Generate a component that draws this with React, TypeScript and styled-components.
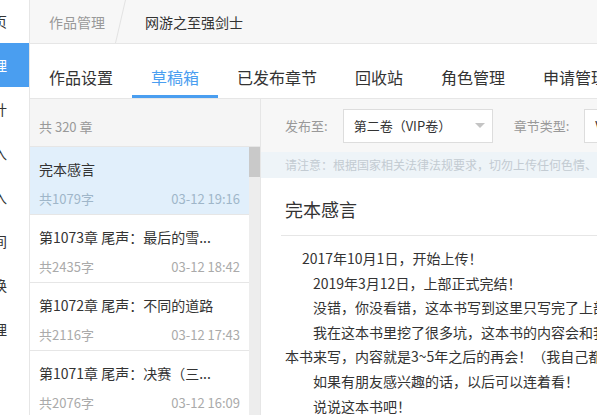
import styled, { createGlobalStyle } from "styled-components";

const blue = "#4a9ef0";
const line = "#e6e6e6";
const textMain = "#333";
const textGray = "#999";

const GlobalStyle = createGlobalStyle`
  html, body {
    margin: 0;
    padding: 0;
    background: #fff;
    overflow: hidden;
  }
  body {
    font-family: "Microsoft YaHei", "Noto Sans CJK SC", "Noto Sans", sans-serif;
    color: ${textMain};
  }
  * {
    box-sizing: border-box;
  }
`;

const Page = styled.div`
  display: flex;
  width: 597px;
  height: 415px;
  overflow: hidden;
`;

const SideNav = styled.nav`
  flex: none;
  width: 30px;
  border-right: 1px solid ${line};
  overflow: hidden;
  background: #fff;
`;

const SideInner = styled.div`
  width: 130px;
  margin-left: -101px;
`;

const SideItem = styled.div<{ $active?: boolean }>`
  height: 44px;
  line-height: 44px;
  padding-right: 22px;
  text-align: right;
  font-size: 14px;
  white-space: nowrap;
  overflow: hidden;
  color: ${(p) => (p.$active ? "#fff" : textMain)};
  background: ${(p) => (p.$active ? blue : "transparent")};
  &:first-child {
    height: 43px;
    line-height: 43px;
  }
`;

const Main = styled.div`
  flex: 1;
  min-width: 0;
  display: flex;
  flex-direction: column;
`;

const Crumbs = styled.div`
  flex: none;
  height: 44px;
  display: flex;
  align-items: center;
  padding-left: 19px;
  background: #f7f7f7;
  border-bottom: 1px solid ${line};
  font-size: 14px;
  white-space: nowrap;
`;

const Crumb = styled.span<{ $muted?: boolean }>`
  color: ${(p) => (p.$muted ? textGray : textMain)};
`;

const Slash = styled.span`
  width: 1px;
  height: 43px;
  margin: 0 24px 0 15px;
  background: #e2e2e2;
  transform: skewX(-13deg);
`;

const Tabs = styled.div`
  flex: none;
  height: 55px;
  display: flex;
  border-bottom: 1px solid ${line};
  white-space: nowrap;
`;

const Tab = styled.div<{ $active?: boolean }>`
  padding: 21px 19px 5px;
  line-height: 25px;
  font-size: 16px;
  color: ${(p) => (p.$active ? blue : textMain)};
  border-bottom: 3px solid ${(p) => (p.$active ? blue : "transparent")};
`;

const Body = styled.div`
  flex: 1;
  min-height: 0;
  display: flex;
`;

const ChapterPanel = styled.div`
  flex: none;
  width: 231px;
  display: flex;
  flex-direction: column;
  border-right: 1px solid ${line};
`;

const ChapterCount = styled.div`
  flex: none;
  height: 48px;
  padding: 18px 9px 0;
  line-height: 20px;
  font-size: 13px;
  color: ${textGray};
  background: #f5f5f5;
  border-bottom: 1px solid ${line};
`;

const ChapterScroll = styled.div`
  flex: 1;
  min-height: 0;
  display: flex;
`;

const ChapterList = styled.div`
  flex: 1;
  min-width: 0;
`;

const Chapter = styled.div<{ $active?: boolean }>`
  height: 68px;
  padding: 12px 9px 0;
  background: ${(p) => (p.$active ? "#e1effb" : "#fff")};
  border-bottom: 1px solid ${line};
`;

const ChapterTitle = styled.div`
  line-height: 20px;
  font-size: 14px;
  color: ${textMain};
  white-space: nowrap;
  overflow: hidden;
`;

const ChapterMeta = styled.div<{ $active?: boolean }>`
  display: flex;
  justify-content: space-between;
  margin-top: 10px;
  line-height: 20px;
  font-size: 13px;
  color: ${(p) => (p.$active ? "#9fb6c9" : "#aaa")};
`;

const ScrollTrack = styled.div`
  flex: none;
  width: 11px;
  background: #ededed;
`;

const ScrollThumb = styled.div`
  height: 30px;
  background: #c9c9c9;
`;

const Editor = styled.div`
  flex: 1;
  min-width: 0;
  display: flex;
  flex-direction: column;
`;

const Toolbar = styled.div`
  flex: none;
  height: 53px;
  display: flex;
  align-items: center;
  padding-left: 24px;
  background: #f7f7f7;
  white-space: nowrap;
  font-size: 13px;
`;

const Label = styled.span`
  color: ${textGray};
  margin-right: 15px;
`;

const Select = styled.div<{ $width: number }>`
  flex: none;
  width: ${(p) => p.$width}px;
  height: 34px;
  margin-right: 21px;
  display: flex;
  align-items: center;
  justify-content: space-between;
  padding: 0 7px 0 10px;
  background: #fff;
  border: 1px solid #ddd;
  color: ${textMain};
`;

const Caret = styled.span`
  width: 0;
  height: 0;
  border-left: 5px solid transparent;
  border-right: 5px solid transparent;
  border-top: 5px solid #c4c4c4;
`;

const Notice = styled.div`
  flex: none;
  height: 26px;
  line-height: 26px;
  padding-left: 24px;
  font-size: 12px;
  color: #c3cbd2;
  background: #eef4f8;
  white-space: nowrap;
`;

const Content = styled.div`
  flex: 1;
  padding-left: 20px;
  background: #fff;
`;

const DraftTitle = styled.div`
  padding: 19px 4px 13px;
  line-height: 25px;
  font-size: 18px;
  color: ${textMain};
  border-bottom: 1px solid ${line};
`;

const DraftText = styled.div`
  padding: 10px 4px 0;
  font-size: 14px;
  line-height: 24.6px;
  color: ${textMain};
  white-space: nowrap;
`;

const Para = styled.p<{ $indent: number }>`
  margin: 0;
  text-indent: ${(p) => p.$indent}px;
`;

const sideItems = ["首页", "作品管理", "作品统计", "稿酬收入", "福利收入", "签约时间", "积分兑换", "账号管理"];

const tabs = ["作品设置", "草稿箱", "已发布章节", "回收站", "角色管理", "申请管理"];

const chapters = [
  { title: "完本感言", words: 1079, time: "03-12 19:16" },
  { title: "第1073章 尾声：最后的雪...", words: 2435, time: "03-12 18:42" },
  { title: "第1072章 尾声：不同的道路", words: 2116, time: "03-12 17:43" },
  { title: "第1071章 尾声：决赛（三...", words: 2076, time: "03-12 16:09" },
];

export default function App() {
  return (
    <>
      <GlobalStyle />
      <Page>
        <SideNav>
          <SideInner>
            {sideItems.map((s, i) => (
              <SideItem key={i} $active={i === 1}>
                {s}
              </SideItem>
            ))}
          </SideInner>
        </SideNav>
        <Main>
          <Crumbs>
            <Crumb $muted>作品管理</Crumb>
            <Slash />
            <Crumb>网游之至强剑士</Crumb>
          </Crumbs>
          <Tabs>
            {tabs.map((t, i) => (
              <Tab key={t} $active={i === 1}>
                {t}
              </Tab>
            ))}
          </Tabs>
          <Body>
            <ChapterPanel>
              <ChapterCount>共 320 章</ChapterCount>
              <ChapterScroll>
                <ChapterList>
                  {chapters.map((c, i) => (
                    <Chapter key={c.title} $active={i === 0}>
                      <ChapterTitle>{c.title}</ChapterTitle>
                      <ChapterMeta $active={i === 0}>
                        <span>共{c.words}字</span>
                        <span>{c.time}</span>
                      </ChapterMeta>
                    </Chapter>
                  ))}
                </ChapterList>
                <ScrollTrack>
                  <ScrollThumb />
                </ScrollTrack>
              </ChapterScroll>
            </ChapterPanel>
            <Editor>
              <Toolbar>
                <Label>发布至:</Label>
                <Select $width={150}>
                  <span>第二卷（VIP卷）</span>
                  <Caret />
                </Select>
                <Label>章节类型:</Label>
                <Select $width={150}>
                  <span>VIP章节</span>
                  <Caret />
                </Select>
              </Toolbar>
              <Notice>请注意：根据国家相关法律法规要求，切勿上传任何色情、暴力、反动等违法内容。</Notice>
              <Content>
                <DraftTitle>完本感言</DraftTitle>
                <DraftText>
                  <Para $indent={17}>2017年10月1日，开始上传！</Para>
                  <Para $indent={28}>2019年3月12日，上部正式完结！</Para>
                  <Para $indent={28}>没错，你没看错，这本书写到这里只写完了上部，下部会另开新书。</Para>
                  <Para $indent={28}>
                    我在这本书里挖了很多坑，这本书的内容会和我下一本书有关，我会用另一
                    <br />
                    本书来写，内容就是3~5年之后的再会！（我自己都有些期待了）
                  </Para>
                  <Para $indent={28}>如果有朋友感兴趣的话，以后可以连着看！</Para>
                  <Para $indent={28}>说说这本书吧！</Para>
                </DraftText>
              </Content>
            </Editor>
          </Body>
        </Main>
      </Page>
    </>
  );
}
